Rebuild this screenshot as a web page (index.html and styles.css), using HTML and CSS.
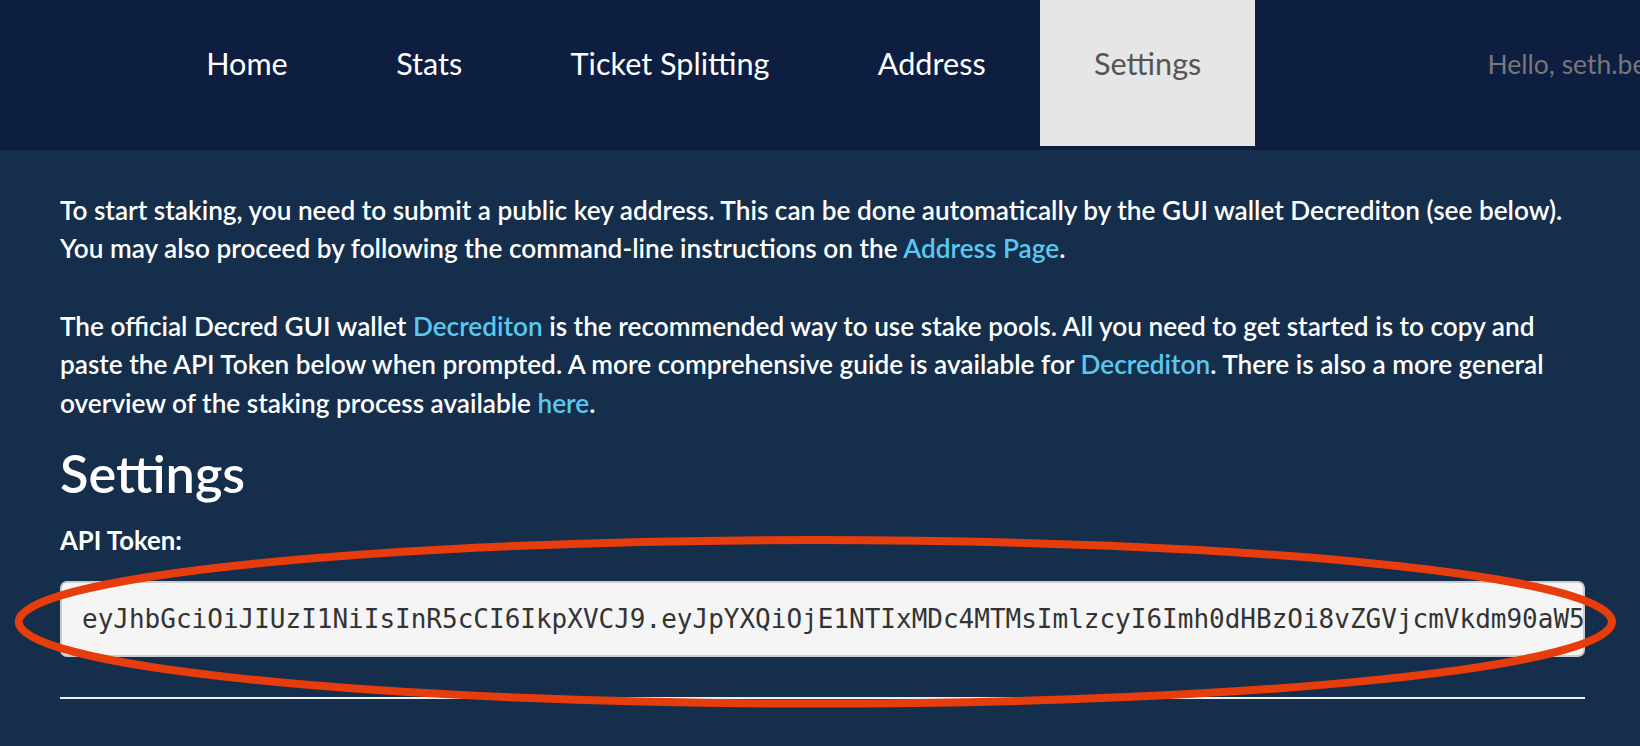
FILE: index.html
```html
<!DOCTYPE html>
<html lang="en">
<head>
<meta charset="utf-8">
<title>Settings - Stake Pool</title>
<link rel="stylesheet" href="styles.css">
</head>
<body>
<header class="navbar">
  <ul class="nav">
    <li class="nav-item"><a href="#">Home</a></li>
    <li class="nav-item"><a href="#">Stats</a></li>
    <li class="nav-item"><a href="#">Ticket Splitting</a></li>
    <li class="nav-item"><a href="#">Address</a></li>
    <li class="nav-item active"><a href="#">Settings</a></li>
  </ul>
  <p class="navbar-text">Hello, seth.benton@example.com</p>
</header>

<main class="container">
  <p class="intro">To start staking, you need to submit a public key address. This can be done automatically by the GUI wallet Decrediton (see below). You may also proceed by following the command-line instructions on the <a href="#">Address Page</a>.</p>
  <p class="intro">The official Decred GUI wallet <a href="#">Decrediton</a> is the recommended way to use stake pools. All you need to get started is to copy and paste the API Token below when prompted. A more comprehensive guide is available for <a href="#">Decrediton</a>. There is also a more general overview of the staking process available <a href="#">here</a>.</p>

  <h2 class="title">Settings</h2>
  <label class="field-label">API Token:</label>
  <div class="token">eyJhbGciOiJIUzI1NiIsInR5cCI6IkpXVCJ9.eyJpYXQiOjE1NTIxMDc4MTMsImlzcyI6Imh0dHBzOi8vZGVjcmVkdm90aW5</div>
  <hr class="divider">
</main>

<svg class="annotation" width="1640" height="746" viewBox="0 0 1640 746" aria-hidden="true">
  <ellipse cx="815.3" cy="621.8" rx="796.7" ry="81.8" fill="none" stroke="#e73c0b" stroke-width="8"/>
</svg>
</body>
</html>
```
FILE: styles.css
```css
* { box-sizing: border-box; }

html, body {
  margin: 0;
  padding: 0;
}

body {
  width: 1640px;
  height: 746px;
  overflow: hidden;
  background: #152e4c;
  font-family: Lato, "Noto Sans", sans-serif;
  color: #fff;
  position: relative;
}

/* ---------- navbar ---------- */
.navbar {
  display: flex;
  align-items: flex-start;
  height: 150px;
  background: #0d1e40;
  white-space: nowrap;
  overflow: hidden;
}

.nav {
  display: flex;
  list-style: none;
  margin: 0 0 0 152px;
  padding: 0;
  height: 146px;
}

.nav-item a {
  display: block;
  height: 146px;
  padding: 43.5px 54.2px 0;
  line-height: 40px;
  font-size: 30.6px;
  font-weight: 400;
  color: #fff;
  text-decoration: none;
}

.nav-item.active a {
  background: #e6e6e6;
  color: #555;
}

.navbar-text {
  margin: 0 0 0 232px;
  padding-top: 44px;
  line-height: 40px;
  font-size: 26.5px;
  color: #777;
}

/* ---------- content ---------- */
.container {
  padding: 40.6px 0 0 60px;
  width: 1585px;
}

.intro {
  width: 1512px;
  margin: 0 0 39px;
  font-size: 26.2px;
  font-weight: 600;
  line-height: 38.5px;
  color: #fff;
}

.intro:last-of-type {
  margin-bottom: 22px;
}

.intro a {
  color: #5ac8f0;
  text-decoration: none;
}

.title {
  margin: 0 0 20.5px;
  font-size: 52.3px;
  font-weight: 600;
  line-height: 57.5px;
  color: #fff;
}

.field-label {
  display: block;
  margin-bottom: 23px;
  font-size: 25.7px;
  font-weight: 700;
  line-height: 36px;
}

.token {
  height: 76px;
  padding-left: 20px;
  border: 2px solid #c9cbcd;
  border-radius: 7px;
  background: #f5f5f5;
  font-family: "DejaVu Sans Mono", "Liberation Mono", monospace;
  font-size: 26px;
  line-height: 72px;
  color: #333;
  white-space: nowrap;
  overflow: hidden;
}

.divider {
  margin: 40px 0 0;
  border: 0;
  border-top: 2px solid #eeeeee;
}

/* ---------- annotation overlay ---------- */
.annotation {
  position: absolute;
  left: 0;
  top: 0;
  pointer-events: none;
}
```
